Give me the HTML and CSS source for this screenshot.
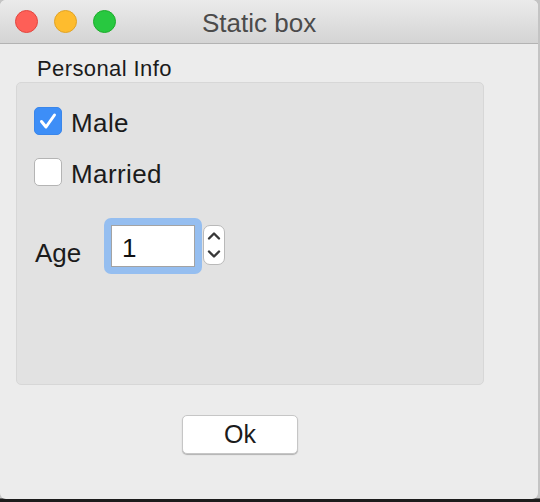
FILE: index.html
```html
<!DOCTYPE html>
<html>
<head>
<meta charset="utf-8">
<link rel="stylesheet" href="styles.css">
</head>
<body>
<div class="window">
  <div class="titlebar">
    <span class="light red"></span>
    <span class="light yellow"></span>
    <span class="light green"></span>
    <span class="title">Static box</span>
  </div>
  <div class="content">
    <div class="legend">Personal Info</div>
    <div class="group">
      <div class="row">
        <span class="check checked">
          <svg width="28" height="28" viewBox="0 0 28 28"><path d="M7.5 14.5 L12 20 L20.5 8" fill="none" stroke="#fff" stroke-width="3" stroke-linecap="round" stroke-linejoin="round"/></svg>
        </span>
        <span class="label">Male</span>
      </div>
      <div class="row second">
        <span class="check"></span>
        <span class="label">Married</span>
      </div>
      <div class="age-row">
        <span class="age-label">Age</span>
        <div class="ring">
          <div class="field">1</div>
        </div>
        <div class="stepper">
          <svg width="20" height="38" viewBox="0 0 20 38">
            <path d="M5 12.5 L10 7.5 L15 12.5" fill="none" stroke="#383838" stroke-width="2.4" stroke-linecap="round" stroke-linejoin="round"/>
            <path d="M5 25.5 L10 30.5 L15 25.5" fill="none" stroke="#383838" stroke-width="2.4" stroke-linecap="round" stroke-linejoin="round"/>
          </svg>
        </div>
      </div>
    </div>
    <div class="button-row">
      <div class="button">Ok</div>
    </div>
  </div>
</div>
</body>
</html>
```
FILE: styles.css
```css
html, body {
  margin: 0;
  padding: 0;
}
body {
  width: 540px;
  height: 502px;
  overflow: hidden;
  background: linear-gradient(to bottom, #c4c4c4 0, #c4c4c4 498px, #1c1c1c 499px);
  font-family: "Liberation Sans", Arial, sans-serif;
  color: #1b1b1b;
}
.window {
  width: 538px;
  height: 499px;
  background: #ececec;
  border-radius: 6px;
  overflow: hidden;
  display: flex;
  flex-direction: column;
}
.titlebar {
  height: 43px;
  border-bottom: 1px solid #b3b3b3;
  background: linear-gradient(to bottom, #ebebeb, #d4d4d4);
  display: flex;
  align-items: flex-start;
  padding-left: 15px;
  box-sizing: content-box;
}
.light {
  width: 21px;
  height: 21px;
  border-radius: 50%;
  margin-top: 10px;
  margin-right: 16px;
  border: 1px solid transparent;
}
.red { background: #fe5f57; border-color: #e2463f; }
.yellow { background: #febc2e; border-color: #e1a325; }
.green { background: #28c840; border-color: #1dad2b; }
.title {
  margin-left: 70px;
  margin-top: 10px;
  font-size: 26px;
  line-height: 26px;
  color: #4b4b4b;
}
.content {
  display: flex;
  flex-direction: column;
  padding-left: 16px;
}
.legend {
  margin-top: 14px;
  margin-left: 21px;
  font-size: 22px;
  line-height: 22px;
  letter-spacing: 0.4px;
}
.group {
  margin-top: 2px;
  width: 468px;
  height: 303px;
  background: #e2e2e2;
  border: 1px solid #d7d7d7;
  border-radius: 5px;
  padding-left: 17px;
  padding-top: 24px;
  box-sizing: border-box;
  display: flex;
  flex-direction: column;
}
.row {
  display: flex;
  align-items: flex-start;
}
.row.second {
  margin-top: 21px;
}
.check {
  width: 26px;
  height: 26px;
  border: 1px solid #b4b4b4;
  border-radius: 5px;
  background: #fff;
  margin-right: 9px;
  display: flex;
}
.check.checked {
  background: #3d8ef7;
  border-color: #3a86ea;
}
.check svg {
  margin: -1px;
}
.label {
  font-size: 26px;
  line-height: 28px;
  margin-top: 2px;
  letter-spacing: 0.4px;
}
.age-row {
  margin-top: 30px;
  display: flex;
  align-items: flex-start;
}
.age-label {
  width: 69px;
  margin-left: 1px;
  font-size: 26px;
  line-height: 28px;
  margin-top: 21px;
}
.ring {
  padding: 7px;
  background: #95bef0;
  border-radius: 7px;
}
.field {
  width: 72px;
  height: 35px;
  background: #fff;
  border: 1px solid #a3a3a3;
  padding: 5px 0 0 10px;
  font-size: 26px;
  line-height: 35px;
  color: #111;
  box-sizing: content-box;
}
.stepper {
  margin-left: 1px;
  margin-top: 7px;
  width: 20px;
  height: 38px;
  background: #fff;
  border: 1px solid #b9b9b9;
  border-radius: 7px;
  display: flex;
}
.button-row {
  display: flex;
  margin-top: 30px;
}
.button {
  margin-left: 166px;
  width: 114px;
  height: 37px;
  background: #fff;
  border: 1px solid #c6c6c6;
  border-radius: 5px;
  box-shadow: 0 1px 1px rgba(0, 0, 0, 0.25);
  text-align: center;
  font-size: 25px;
  line-height: 37px;
  color: #1b1b1b;
}
```
